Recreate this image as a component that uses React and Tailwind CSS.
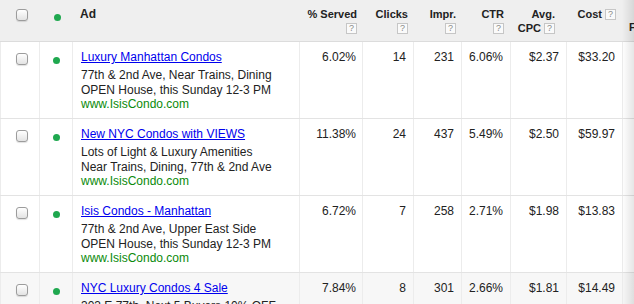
import React from 'react';

const ads = [
  {
    title: 'Luxury Manhattan Condos',
    lines: ['77th & 2nd Ave, Near Trains, Dining', 'OPEN House, this Sunday 12-3 PM'],
    stats: ['6.02%', '14', '231', '6.06%', '$2.37', '$33.20'],
  },
  {
    title: 'New NYC Condos with VIEWS',
    lines: ['Lots of Light & Luxury Amenities', 'Near Trains, Dining, 77th & 2nd Ave'],
    stats: ['11.38%', '24', '437', '5.49%', '$2.50', '$59.97'],
  },
  {
    title: 'Isis Condos - Manhattan',
    lines: ['77th & 2nd Ave, Upper East Side', 'OPEN House, this Sunday 12-3 PM'],
    stats: ['6.72%', '7', '258', '2.71%', '$1.98', '$13.83'],
  },
  {
    title: 'NYC Luxury Condos 4 Sale',
    lines: ['303 E 77th, Next 5 Buyers 10% OFF', 'OPEN House, this Sunday 12-3 PM'],
    stats: ['7.84%', '8', '301', '2.66%', '$1.81', '$14.49'],
    shaded: true,
  },
];

const cols = 'grid grid-cols-[40px_33px_227px_63px_51px_48px_49px_56px_56px_90px]';

const Help = () => (
  <span className="inline-block w-[11px] h-[11px] ml-[3px] align-top mt-[1px] border border-[#c6c6c6] bg-[#fafafa] text-[9px] leading-[9px] font-normal text-[#8a8a8a] text-center">
    ?
  </span>
);

const Checkbox = () => (
  <span className="block w-[12px] h-[12px] rounded-[3px] border border-[#9c9c9c] bg-gradient-to-b from-white to-[#e3e3e3] shadow-[0_1px_1px_rgba(0,0,0,0.12)]" />
);

const Dot = () => <span className="block w-[7px] h-[7px] rounded-full bg-[#1fa84f]" />;

const HeadCol = ({ label, pr = 'pr-[6px]' }) => (
  <div className={`text-right pt-[8px] ${pr}`}>
    <div className="leading-[13px]">{label}</div>
    <div className="leading-[13px] mt-[1px]"><Help /></div>
  </div>
);

const App = () => {
  return (
    <div className="relative w-[634px] h-[304px] overflow-hidden bg-white font-['Liberation_Sans',Arial,sans-serif] text-[#222]">
      {/* Header */}
      <div className={`${cols} h-[42px] bg-[#efefef] border-b border-[#dcdcdc] text-[11px] font-bold`}>
        <div className="flex justify-center pt-[9px] pl-[3px]"><Checkbox /></div>
        <div className="flex justify-center pt-[14px] pl-[1px]"><Dot /></div>
        <div className="pl-[7px] pt-[8px] leading-[13px] text-[12px]">Ad</div>
        <HeadCol label="% Served" />
        <HeadCol label="Clicks" />
        <HeadCol label="Impr." />
        <HeadCol label="CTR" pr="pr-[7px]" />
        <div className="text-right pt-[8px] pr-[12px]">
          <div className="leading-[13px]">Avg.</div>
          <div className="leading-[13px] mt-[1px]">CPC<Help /></div>
        </div>
        <div className="text-right pt-[8px] pr-[7px] leading-[13px]">Cost<Help /></div>
        <div className="pt-[21px] pl-[6px] leading-[13px] whitespace-nowrap">First page bid</div>
      </div>

      {/* Rows */}
      {ads.map((ad) => (
        <div
          key={ad.title}
          className={`${cols} h-[77px] border-b border-[#e3e3e3] text-[12px] ${ad.shaded ? 'bg-[#f7f7f7]' : 'bg-white'}`}
        >
          <div className="flex justify-center pt-[11px] pl-[3px] border-l border-r border-[#ececec]"><Checkbox /></div>
          <div className="flex justify-center pt-[15px] border-r border-[#ececec]"><Dot /></div>
          <div className="pl-[8px] pt-[8px] border-r border-[#ececec] whitespace-nowrap">
            <a href="#" className="block leading-[15px] mb-[3px] text-[#0000ee] underline">{ad.title}</a>
            {ad.lines.map((l) => (
              <div key={l} className="leading-[14.5px]">{l}</div>
            ))}
            <div className="leading-[14.5px] text-[#0a8a0a]">www.IsisCondo.com</div>
          </div>
          {ad.stats.map((s, i) => (
            <div
              key={i}
              className={`text-right pt-[8px] leading-[15px] border-r border-[#ececec] ${i === 0 ? 'pr-[6px]' : 'pr-[7px]'}`}
            >
              {s}
            </div>
          ))}
          <div />
        </div>
      ))}

      {/* scroll shadow at right edge */}
      <div className="absolute top-0 right-0 h-full w-[12px] bg-gradient-to-r from-transparent to-black/10 pointer-events-none" />
    </div>
  );
};

export default App;
